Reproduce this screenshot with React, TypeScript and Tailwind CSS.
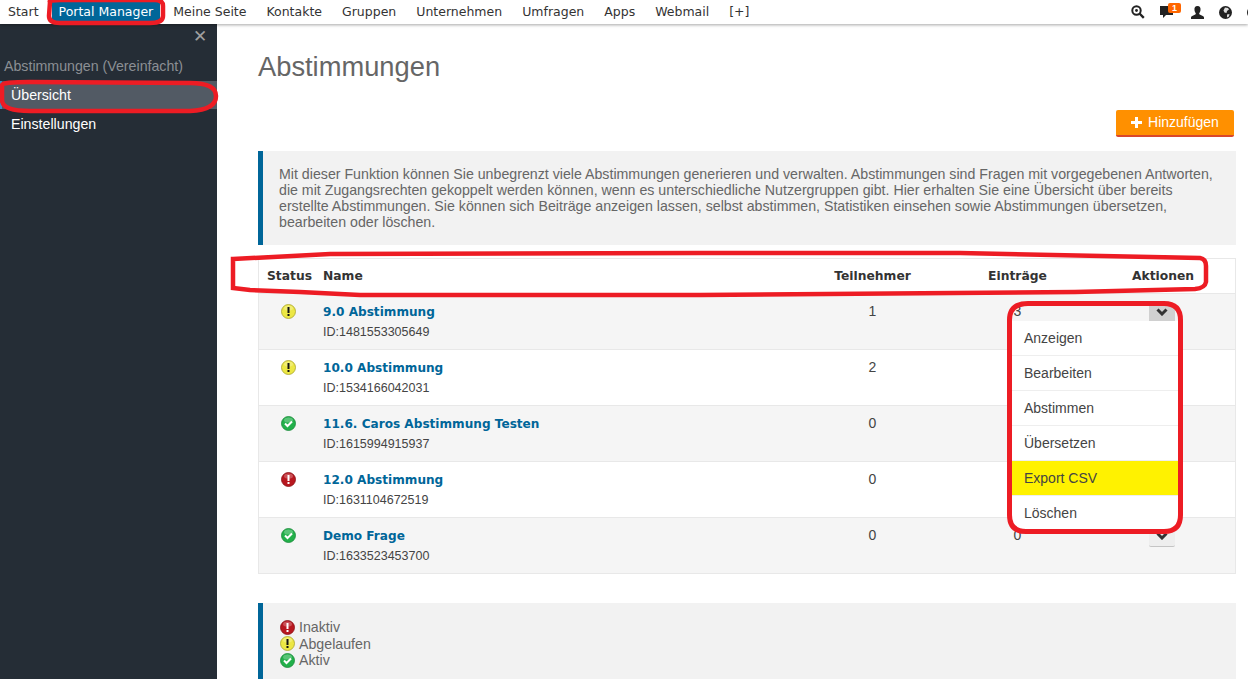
const navItems = ['Start', 'Portal Manager', 'Meine Seite', 'Kontakte', 'Gruppen', 'Unternehmen', 'Umfragen', 'Apps', 'Webmail', '[+]'];

const rows = [
    { status: 'warn', name: '9.0 Abstimmung', id: '1481553305649', users: 1, entries: 3 },
    { status: 'warn', name: '10.0 Abstimmung', id: '1534166042031', users: 2, entries: 0 },
    { status: 'ok', name: '11.6. Caros Abstimmung Testen', id: '1615994915937', users: 0, entries: 0 },
    { status: 'off', name: '12.0 Abstimmung', id: '1631104672519', users: 0, entries: 0 },
    { status: 'ok', name: 'Demo Frage', id: '1633523453700', users: 0, entries: 0 },
];

const menu = ['Anzeigen', 'Bearbeiten', 'Abstimmen', 'Übersetzen', 'Export CSV', 'Löschen'];

function StatusIcon({ status }: { status: string }) {
    const fill = status === 'ok' ? '#22b04a' : status === 'warn' ? '#ece744' : '#b8171f';
    const edge = status === 'ok' ? '#1a8a3a' : status === 'warn' ? '#a9a52c' : '#8a1016';
    return (
        <svg width="15" height="15" viewBox="0 0 15 15" className="shrink-0">
            <circle cx="7.5" cy="7.5" r="7" fill={fill} stroke={edge} strokeWidth="0.8" />
            <ellipse cx="7.5" cy="4" rx="4.5" ry="2.6" fill="#fff" opacity="0.25" />
            {status === 'ok' && <path d="M4 7.5l2.5 2.5 4.5-4.5" fill="none" stroke="#fff" strokeWidth="2" />}
            {status === 'warn' && <path d="M6.5 3h2v6h-2zM6.5 10h2v2h-2z" fill="#111" />}
            {status === 'off' && <path d="M6.5 3h2v6h-2zM6.5 10h2v2h-2z" fill="#fff" />}
        </svg>
    );
}

function TopIcons() {
    return (
        <div className="flex w-[117px] items-center text-[#222]">
            <svg width="14" height="14" viewBox="0 0 14 14" className="shrink-0">
                <circle cx="5.5" cy="5.5" r="4.2" fill="none" stroke="#222" strokeWidth="2" />
                <circle cx="5.5" cy="5.5" r="1.4" fill="#222" />
                <path d="M8.5 8.5l4.3 4.3" stroke="#222" strokeWidth="2.4" />
            </svg>
            <span className="relative ml-[15px] shrink-0">
                <svg width="13" height="12" viewBox="0 0 13 12" className="block"><path d="M0 0h13v9H6l-3 3V9H0z" fill="#222" /></svg>
                <span className="absolute -top-[3px] left-[8px] w-[13px] rounded-[2px] bg-[#ff6600] text-center text-[9px] font-bold leading-[10px] text-white">1</span>
            </span>
            <svg width="13" height="13" viewBox="0 0 13 13" className="ml-[18px] shrink-0">
                <path d="M6.5 0C9 0 9.8 2 9.5 4.2 9.3 5.6 8.7 6.6 8.2 7.2c0 1 .5 1.4 2 2 1.5.6 2.8 1 2.8 2.3V13H0v-1.5C0 10.2 1.3 9.8 2.8 9.2c1.5-.6 2-1 2-2-.5-.6-1.1-1.6-1.3-3C3.2 2 4 0 6.5 0z" fill="#222" />
            </svg>
            <svg width="13" height="13" viewBox="0 0 13 13" className="ml-[15px] shrink-0">
                <circle cx="6.5" cy="6.5" r="6.5" fill="#222" />
                <path d="M6 1.5l3 .5 1 1.5-2 1.5-.5 2-2-.5-1-2zM8 8.5l2.5-.5-.5 2.5-2 1z" fill="#ddd" />
            </svg>
            <span className="ml-[15px] h-[13px] w-[13px] shrink-0 rounded-full bg-[#222]" />
        </div>
    );
}

export default function App() {
    return (
        <div className="relative h-[679px] w-[1248px] overflow-hidden bg-white font-['Liberation_Sans',sans-serif]">
            <header className="relative z-10 flex h-6 items-center justify-between bg-white shadow-[0_1px_3px_rgba(0,0,0,0.35)]">
                <nav className="flex items-center gap-5 pl-2 font-['DejaVu_Sans',sans-serif] text-[12.5px] text-[#333]">
                    {navItems.map((item) =>
                        item === 'Portal Manager' ? (
                            <span key={item} className="-mx-[7px] bg-[#006699] px-[7px] leading-[22px] text-white">{item}</span>
                        ) : (
                            <span key={item} className="leading-[22px]">{item}</span>
                        ),
                    )}
                </nav>
                <TopIcons />
            </header>

            <div className="flex h-[655px]">
                <aside className="w-[217px] shrink-0 bg-[#252d36] text-[14.2px]">
                    <div className="flex h-[21px] items-end justify-end pr-[10px] text-[17px] leading-[17px] text-[#a0a0a0]">✕</div>
                    <div className="mt-[11px] pl-1 text-[#8b8f94]">Abstimmungen (Vereinfacht)</div>
                    <div className="mt-[4px] border-l-[2px] border-[#3b8fc4] bg-[#525a64] pl-[9px] leading-[28px] text-white">Übersicht</div>
                    <div className="pl-[11px] leading-[30px] text-white">Einstellungen</div>
                </aside>

                <main className="flex-1 pl-[41px] pr-3">
                    <h1 className="mt-[26px] text-[27.3px] leading-[34px] text-[#666]">Abstimmungen</h1>
                    <div className="mt-[26px] flex justify-end pr-[2px]">
                        <button className="flex h-[27px] w-[118px] items-center justify-center gap-[6px] rounded-[2px] border-b-2 border-[#d9472b] bg-[#ff9000] text-[14px] text-white">
                            <svg width="11" height="11" viewBox="0 0 11 11"><path d="M4 0h3v4h4v3H7v4H4V7H0V4h4z" fill="#fff" /></svg>
                            Hinzufügen
                        </button>
                    </div>

                    <div className="mt-[14px] h-[94px] border-l-[5px] border-[#006699] bg-[#f2f2f2] pl-4 pr-5 pt-[15px] text-[14.2px] leading-4 text-[#666]">
                        Mit dieser Funktion können Sie unbegrenzt viele Abstimmungen generieren und verwalten. Abstimmungen sind Fragen mit vorgegebenen Antworten, die mit Zugangsrechten gekoppelt werden können, wenn es unterschiedliche Nutzergruppen gibt. Hier erhalten Sie eine Übersicht über bereits erstellte Abstimmungen. Sie können sich Beiträge anzeigen lassen, selbst abstimmen, Statistiken einsehen sowie Abstimmungen übersetzen, bearbeiten oder löschen.
                    </div>

                    <section className="mt-[13px] w-[978px] border border-[#e8e8e8] font-['DejaVu_Sans',sans-serif]">
                        <div className="grid h-[34px] grid-cols-[64px_477px_145px_145px_1fr] items-center pt-[1px] text-[12.3px] font-bold text-[#333]">
                            <span className="pl-2">Status</span>
                            <span>Name</span>
                            <span className="text-center">Teilnehmer</span>
                            <span className="text-center">Einträge</span>
                            <span className="pl-[42px]">Aktionen</span>
                        </div>
                        {rows.map((row, i) => (
                            <div key={row.id} className={`grid h-[56px] grid-cols-[64px_477px_145px_145px_1fr] border-t border-[#e8e8e8] pt-[10px] ${i % 2 === 0 ? 'bg-[#f5f5f5]' : 'bg-white'}`}>
                                <span className="pl-[22px]"><StatusIcon status={row.status} /></span>
                                <div>
                                    <div className="text-[12.1px] font-bold leading-4 text-[#006699]">{row.name}</div>
                                    <div className="mt-[4px] font-['Liberation_Sans',sans-serif] text-[12.5px] leading-4 text-[#444]">ID:{row.id}</div>
                                </div>
                                <span className="-mt-[1px] text-center font-['Liberation_Sans',sans-serif] text-[14px] leading-4 text-[#444]">{row.users}</span>
                                <span className="-mt-[1px] text-center font-['Liberation_Sans',sans-serif] text-[14px] leading-4 text-[#444]">{row.entries}</span>
                                <span className="pl-[59px]">
                                    <span className={`flex h-[19px] w-[26px] justify-center rounded-b-[2px] border-b border-[#c4c4c4] pt-[4px] ${i === 0 ? 'bg-[#d0d0d0]' : 'bg-[#eeeeee]'}`}>
                                        <svg width="12" height="8" viewBox="0 0 12 8" fill="none"><path d="M1.5 1.5L6 6l4.5-4.5" stroke="#333" strokeWidth="3" /></svg>
                                    </span>
                                </span>
                            </div>
                        ))}
                    </section>

                    <div className="mt-[29px] h-[90px] border-l-[5px] border-[#006699] bg-[#f2f2f2] pl-[17px] pt-4 text-[14.2px] leading-[16.5px] text-[#666]">
                        <div className="flex items-center gap-1"><StatusIcon status="off" /> Inaktiv</div>
                        <div className="flex items-center gap-1"><StatusIcon status="warn" /> Abgelaufen</div>
                        <div className="flex items-center gap-1"><StatusIcon status="ok" /> Aktiv</div>
                    </div>
                </main>
            </div>

            {/* opened action menu */}
            <div className="absolute left-[1012px] top-[321px] z-20 w-[166px] bg-white text-[14px] text-[#444]">
                {menu.map((item) => (
                    <div key={item} className={`h-[35px] border-b border-[#eee] pl-3 leading-[34px] ${item === 'Export CSV' ? 'bg-[#fff200]' : ''}`}>{item}</div>
                ))}
            </div>

            {/* red marker annotations drawn on the screenshot */}
            <svg className="pointer-events-none absolute inset-0 z-30" width="1248" height="679" fill="none" stroke="#ed1c24" strokeWidth="4.5">
                <path d="M50 2 Q48 0 60 0 L155 0 Q163 0 163 6 L163 16 Q163 23 150 23 L60 23 Q49 23 49 16 Z" />
                <path d="M2 85 Q2 82 30 82 L190 83 Q216 83 216 96 Q216 110 190 111 L30 111 Q2 111 2 100 Z" />
                <path d="M233 259 L330 254 L700 253 L960 253 L1200 258 Q1206 259 1206 266 L1206 282 Q1205 288 1195 289 L1075 292 L700 295 L360 295 L300 292 L250 290 L233 288 Z" />
                <path d="M1028 303.5 L1164 303.5 Q1180.5 303.5 1180.5 320 L1180.5 515 Q1180.5 531.5 1164 531.5 L1026 531.5 Q1009.5 531.5 1009.5 515 L1009.5 320 Q1009.5 303.5 1028 303.5 Z" strokeWidth="5" />
            </svg>
        </div>
    );
}
